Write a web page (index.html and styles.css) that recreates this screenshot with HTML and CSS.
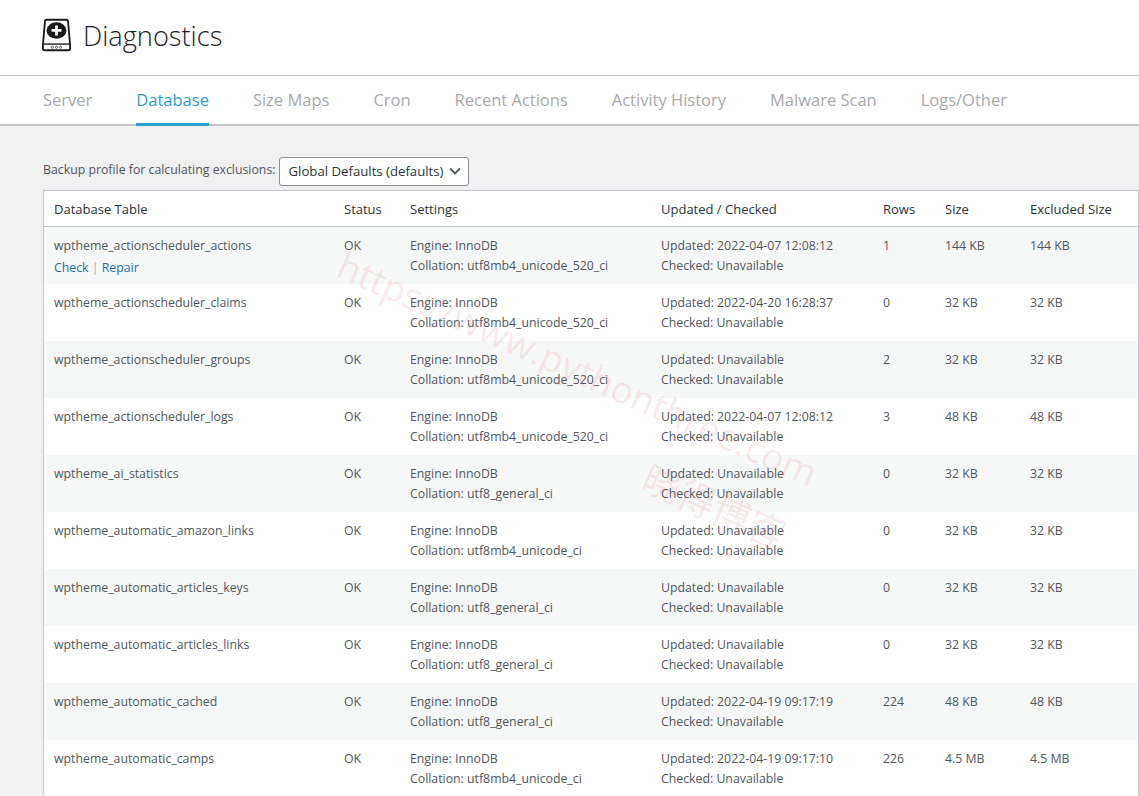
FILE: index.html
```html
<!DOCTYPE html>
<html lang="en">
<head>
  <meta charset="UTF-8">
  <title>Diagnostics</title>
  <link rel="stylesheet" href="styles.css">
</head>
<body>
  <header class="page-title">
    <svg class="title-icon" width="29" height="34" viewBox="0 0 32 36">
      <path d="M5 1.200h22c1 0 1.500 .6 1.700 1.500l2.300 26.300v3.800c0 1.200-.8 2-2 2H3c-1.200 0-2-.8-2-2V29L3.300 2.700C3.400 1.700 4 1.200 5 1.200z" fill="#fff" stroke="#1a1a1a" stroke-width="2"/>
      <path d="M1.500 28h29" stroke="#1a1a1a" stroke-width="1.500"/>
      <ellipse cx="16" cy="13" rx="11" ry="9" fill="#1a1a1a"/>
      <path d="M16 7.500v11M10.500 13h11" stroke="#fff" stroke-width="3"/>
      <circle cx="11.500" cy="31.500" r="1.200" fill="none" stroke="#1a1a1a" stroke-width=".7"/>
      <circle cx="16" cy="31.500" r="1.200" fill="none" stroke="#1a1a1a" stroke-width=".7"/>
      <circle cx="20.500" cy="31.500" r="1.200" fill="none" stroke="#1a1a1a" stroke-width=".7"/>
    </svg>
    <h1>Diagnostics</h1>
  </header>

  <nav class="tabs">
    <a href="#">Server</a>
    <a href="#" class="active">Database</a>
    <a href="#">Size Maps</a>
    <a href="#">Cron</a>
    <a href="#">Recent Actions</a>
    <a href="#">Activity History</a>
    <a href="#">Malware Scan</a>
    <a href="#">Logs/Other</a>
  </nav>

  <main class="content">
    <div class="profile-row">
      <label for="profile">Backup profile for calculating exclusions:</label>
      <div class="select-box" id="profile">
        Global Defaults (defaults)
        <svg width="12" height="8" viewBox="0 0 12 8"><path d="M1 1.500l5 5 5-5" fill="none" stroke="#50575e" stroke-width="1.800"/></svg>
      </div>
    </div>

    <table class="db-table">
      <colgroup>
        <col class="c-name"><col class="c-status"><col class="c-settings"><col class="c-updated"><col class="c-rows"><col class="c-size"><col class="c-excluded">
      </colgroup>
      <thead>
        <tr><th>Database Table</th><th>Status</th><th>Settings</th><th>Updated / Checked</th><th>Rows</th><th>Size</th><th>Excluded Size</th></tr>
      </thead>
      <tbody>
        <tr>
          <td>wptheme_actionscheduler_actions<div class="row-actions"><a href="#">Check</a> | <a href="#">Repair</a></div></td>
          <td>OK</td>
          <td>Engine: InnoDB<br>Collation: utf8mb4_unicode_520_ci</td>
          <td>Updated: 2022-04-07 12:08:12<br>Checked: Unavailable</td>
          <td>1</td><td>144 KB</td><td>144 KB</td>
        </tr>
        <tr>
          <td>wptheme_actionscheduler_claims</td>
          <td>OK</td>
          <td>Engine: InnoDB<br>Collation: utf8mb4_unicode_520_ci</td>
          <td>Updated: 2022-04-20 16:28:37<br>Checked: Unavailable</td>
          <td>0</td><td>32 KB</td><td>32 KB</td>
        </tr>
        <tr>
          <td>wptheme_actionscheduler_groups</td>
          <td>OK</td>
          <td>Engine: InnoDB<br>Collation: utf8mb4_unicode_520_ci</td>
          <td>Updated: Unavailable<br>Checked: Unavailable</td>
          <td>2</td><td>32 KB</td><td>32 KB</td>
        </tr>
        <tr>
          <td>wptheme_actionscheduler_logs</td>
          <td>OK</td>
          <td>Engine: InnoDB<br>Collation: utf8mb4_unicode_520_ci</td>
          <td>Updated: 2022-04-07 12:08:12<br>Checked: Unavailable</td>
          <td>3</td><td>48 KB</td><td>48 KB</td>
        </tr>
        <tr>
          <td>wptheme_ai_statistics</td>
          <td>OK</td>
          <td>Engine: InnoDB<br>Collation: utf8_general_ci</td>
          <td>Updated: Unavailable<br>Checked: Unavailable</td>
          <td>0</td><td>32 KB</td><td>32 KB</td>
        </tr>
        <tr>
          <td>wptheme_automatic_amazon_links</td>
          <td>OK</td>
          <td>Engine: InnoDB<br>Collation: utf8mb4_unicode_ci</td>
          <td>Updated: Unavailable<br>Checked: Unavailable</td>
          <td>0</td><td>32 KB</td><td>32 KB</td>
        </tr>
        <tr>
          <td>wptheme_automatic_articles_keys</td>
          <td>OK</td>
          <td>Engine: InnoDB<br>Collation: utf8_general_ci</td>
          <td>Updated: Unavailable<br>Checked: Unavailable</td>
          <td>0</td><td>32 KB</td><td>32 KB</td>
        </tr>
        <tr>
          <td>wptheme_automatic_articles_links</td>
          <td>OK</td>
          <td>Engine: InnoDB<br>Collation: utf8_general_ci</td>
          <td>Updated: Unavailable<br>Checked: Unavailable</td>
          <td>0</td><td>32 KB</td><td>32 KB</td>
        </tr>
        <tr>
          <td>wptheme_automatic_cached</td>
          <td>OK</td>
          <td>Engine: InnoDB<br>Collation: utf8_general_ci</td>
          <td>Updated: 2022-04-19 09:17:19<br>Checked: Unavailable</td>
          <td>224</td><td>48 KB</td><td>48 KB</td>
        </tr>
        <tr>
          <td>wptheme_automatic_camps</td>
          <td>OK</td>
          <td>Engine: InnoDB<br>Collation: utf8mb4_unicode_ci</td>
          <td>Updated: 2022-04-19 09:17:10<br>Checked: Unavailable</td>
          <td>226</td><td>4.5 MB</td><td>4.5 MB</td>
        </tr>
      </tbody>
    </table>
  </main>

  <div class="watermark wm-url">https://www.pythonthree.com</div>
  <div class="watermark wm-name">晓得博客</div>
</body>
</html>
```

FILE: styles.css
```css
* {
  box-sizing: border-box;
}

html, body {
  margin: 0;
  height: 796px;
  overflow: hidden;
}

body {
  position: relative;
  background: #f0f0f1;
  color: #50575e;
  font-family: "Open Sans", "Noto Sans CJK SC", sans-serif;
  font-size: 12.3px;
  line-height: 20px;
}

/* Title */
.page-title {
  display: flex;
  align-items: center;
  gap: 12px;
  height: 76px;
  padding: 0 0 3px 42px;
  background: #fff;
  border-bottom: 1px solid #c3c4c7;
}

.title-icon {
  margin-bottom: 2px;
}

.page-title h1 {
  margin: 0;
  font-size: 27.2px;
  font-weight: 300;
  line-height: 40px;
  color: #1d2327;
}

/* Tabs */
.tabs {
  display: flex;
  gap: 44px;
  height: 50px;
  padding-left: 43px;
  background: #fff;
  border-bottom: 2px solid #c3c4c7;
}

.tabs a {
  height: 50px;
  font-size: 16.5px;
  line-height: 48px;
  font-weight: 500;
  color: #a7aaad;
  text-decoration: none;
}

.tabs a.active {
  color: #2e9fcb;
  border-bottom: 3px solid #2e9fcb;
}

/* Profile select */
.content {
  padding: 31px 0 0 43px;
}

.profile-row {
  display: flex;
  align-items: flex-start;
  gap: 3px;
  height: 33px;
}

.profile-row label {
  padding-top: 3px;
}

.select-box {
  display: flex;
  align-items: center;
  justify-content: space-between;
  width: 190px;
  height: 29px;
  padding: 0 7px 1px 9px;
  background: #fff;
  border: 1px solid #8c8f94;
  border-radius: 3px;
  font-size: 13.2px;
  color: #2c3338;
}

/* Table */
.db-table {
  width: 1096px;
  table-layout: fixed;
  border-collapse: separate;
  border-spacing: 0;
  background: #fff;
  border: 1px solid #c3c4c7;
  border-bottom: 0;
}

.c-name { width: 290px; }
.c-status { width: 66px; }
.c-settings { width: 251px; }
.c-updated { width: 222px; }
.c-rows { width: 62px; }
.c-size { width: 85px; }

.db-table th {
  height: 36px;
  padding: 0 10px;
  text-align: left;
  font-weight: 400;
  font-size: 13px;
  color: #2c3338;
  border-bottom: 1px solid #c3c4c7;
}

.db-table td {
  height: 57px;
  padding: 9px 10px 8px;
  vertical-align: top;
  white-space: nowrap;
}

.db-table tbody tr:nth-child(odd) {
  background: #f6f7f7;
}

.row-actions {
  margin: 2px 0 -2px;
  color: #a7aaad;
}

.row-actions a {
  color: #2271b1;
  text-decoration: none;
}

/* Watermark */
.watermark {
  position: absolute;
  color: rgba(230, 90, 110, 0.12);
  white-space: nowrap;
  pointer-events: none;
  transform-origin: left center;
}

.wm-url {
  left: 340px;
  top: 243px;
  font-size: 37px;
  line-height: 40px;
  transform: rotate(24deg);
}

.wm-name {
  left: 645px;
  top: 455px;
  font-size: 38px;
  line-height: 40px;
  transform: rotate(24deg);
}
```
